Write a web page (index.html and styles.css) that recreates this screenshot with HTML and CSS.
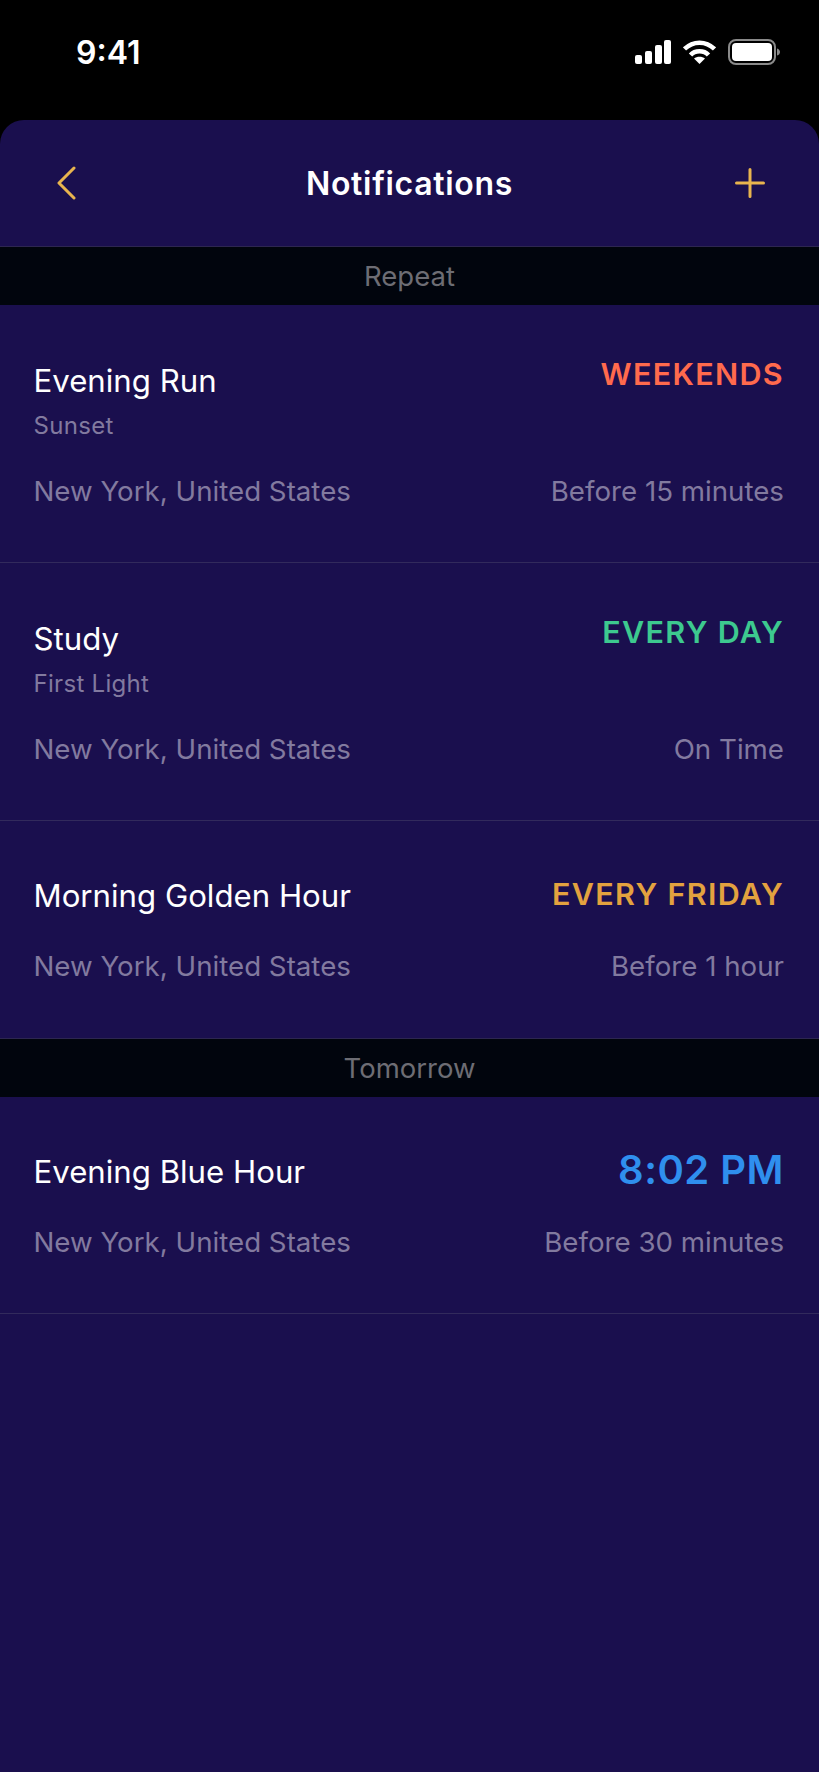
FILE: index.html
```html
<!DOCTYPE html>
<html lang="en">
<head>
  <meta charset="UTF-8">
  <meta name="viewport" content="width=device-width, initial-scale=1.0">
  <title>Notifications</title>
  <link rel="stylesheet" href="styles.css">
</head>
<body>
  <div class="status-bar">
    <span class="clock">9:41</span>
    <div class="status-icons">
      <svg width="36" height="24" viewBox="0 0 36 24" fill="#fff">
        <rect x="0" y="15" width="7" height="9" rx="2"/>
        <rect x="10" y="11" width="7" height="13" rx="2"/>
        <rect x="20" y="5" width="7" height="19" rx="2"/>
        <rect x="29" y="0" width="7" height="24" rx="2"/>
      </svg>
      <svg width="33" height="24" viewBox="0 0 33 24" fill="none" stroke="#fff" stroke-width="4.500">
        <path d="M1.500 9C10 0.500 23 0.500 31.500 9"/>
        <path d="M7.500 15C12 10 21 10 25.500 15"/>
        <path d="M16.500 24L11 18.500C14 16 19 16 22 18.500Z" fill="#fff" stroke="none"/>
      </svg>
      <svg width="52" height="26" viewBox="0 0 52 26">
        <rect x="1" y="1" width="46" height="24" rx="7" fill="none" stroke="#8a8a8a" stroke-width="2"/>
        <rect x="4" y="4" width="40" height="18" rx="4" fill="#fff"/>
        <path d="M49 9.500C51 10 52 11.500 52 13S51 16 49 16.500Z" fill="#8a8a8a"/>
      </svg>
    </div>
  </div>

  <div class="sheet">
    <div class="nav">
      <svg class="nav-back" width="20" height="34" viewBox="0 0 20 34" fill="none" stroke="#e8b44e" stroke-width="3" stroke-linecap="round" stroke-linejoin="round">
        <path d="M18 2L3 17L18 32"/>
      </svg>
      <h1 class="nav-title">Notifications</h1>
      <svg class="nav-add" width="30" height="30" viewBox="0 0 30 30" fill="none" stroke="#e8b44e" stroke-width="3" stroke-linecap="round">
        <path d="M15 1.500V28.500M1.500 15H28.500"/>
      </svg>
    </div>

    <div class="section">Repeat</div>

    <div class="row row-sub">
      <div class="row-top">
        <div>
          <div class="name">Evening Run</div>
          <div class="sub">Sunset</div>
        </div>
        <div class="tag tag-orange">WEEKENDS</div>
      </div>
      <div class="row-bottom"><span>New York, United States</span><span>Before 15 minutes</span></div>
    </div>

    <div class="row row-sub">
      <div class="row-top">
        <div>
          <div class="name">Study</div>
          <div class="sub">First Light</div>
        </div>
        <div class="tag tag-green">EVERY DAY</div>
      </div>
      <div class="row-bottom"><span>New York, United States</span><span>On Time</span></div>
    </div>

    <div class="row row-plain no-line">
      <div class="row-top">
        <div class="name">Morning Golden Hour</div>
        <div class="tag tag-gold">EVERY FRIDAY</div>
      </div>
      <div class="row-bottom"><span>New York, United States</span><span>Before 1 hour</span></div>
    </div>

    <div class="section">Tomorrow</div>

    <div class="row row-plain">
      <div class="row-top">
        <div class="name">Evening Blue Hour</div>
        <div class="tag tag-blue">8:02 PM</div>
      </div>
      <div class="row-bottom"><span>New York, United States</span><span>Before 30 minutes</span></div>
    </div>
  </div>
</body>
</html>
```

FILE: styles.css
```css
* {
  box-sizing: border-box;
}

body {
  margin: 0;
  width: 819px;
  height: 1772px;
  overflow: hidden;
  background-color: #000;
  font-family: Inter, "Liberation Sans", sans-serif;
  display: flex;
  flex-direction: column;
}

.status-bar {
  height: 120px;
  padding: 35px 39px 0 76px;
  display: flex;
  justify-content: space-between;
  align-items: flex-start;
  color: #fff;
}

.clock {
  font-size: 32px;
  line-height: 36px;
  font-weight: 600;
}

.status-icons {
  display: flex;
  align-items: center;
  gap: 12px;
  height: 34px;
}

.sheet {
  flex: 1;
  background-color: #1a0f4e;
  border-radius: 24px 24px 0 0;
}

.nav {
  height: 126px;
  padding: 0 54px;
  display: grid;
  grid-template-columns: 1fr auto 1fr;
  align-items: center;
}

.nav-back {
  margin-left: 2px;
}

.nav-add {
  justify-self: end;
}

.nav-title {
  margin: 0;
  font-size: 32px;
  letter-spacing: 0.7px;
  font-weight: 600;
  color: #fff;
}

.section {
  height: 59px;
  border-top: 1px solid #2d2650;
  background-color: #01050d;
  color: #6d6d74;
  font-size: 27.500px;
  line-height: 58px;
  text-align: center;
}

.row {
  padding: 0 35px 0 33.500px;
  border-bottom: 1px solid #322a5c;
}

.no-line {
  border-bottom: 0;
}

.row-sub {
  height: 258px;
  padding-top: 56px;
}

.row-plain {
  height: 217px;
  padding-top: 55px;
}

.row-top {
  display: flex;
  justify-content: space-between;
  align-items: flex-start;
}

.name {
  font-size: 31.200px;
  line-height: 40px;
  color: #fff;
}

.sub {
  margin-top: 9px;
  font-size: 24px;
  letter-spacing: 0.3px;
  line-height: 32px;
  color: #827a9f;
}

.row-bottom {
  display: flex;
  justify-content: space-between;
  margin-top: 32px;
  font-size: 27.700px;
  line-height: 36px;
  color: #827a9f;
}

.row-sub .row-bottom {
  margin-top: 31px;
}

.tag {
  font-size: 30.500px;
  letter-spacing: 1.300px;
  line-height: 36px;
  font-weight: 600;
}

.row-sub .tag {
  margin-top: -5px;
}

.tag-orange {
  color: #ff6a4d;
}

.tag-green {
  color: #3dc98f;
}

.tag-gold {
  color: #e3a23f;
}

.tag-blue {
  margin-top: -2px;
  font-size: 40px;
  letter-spacing: 0.5px;
  line-height: 40px;
  color: #2f8fee;
}
```
